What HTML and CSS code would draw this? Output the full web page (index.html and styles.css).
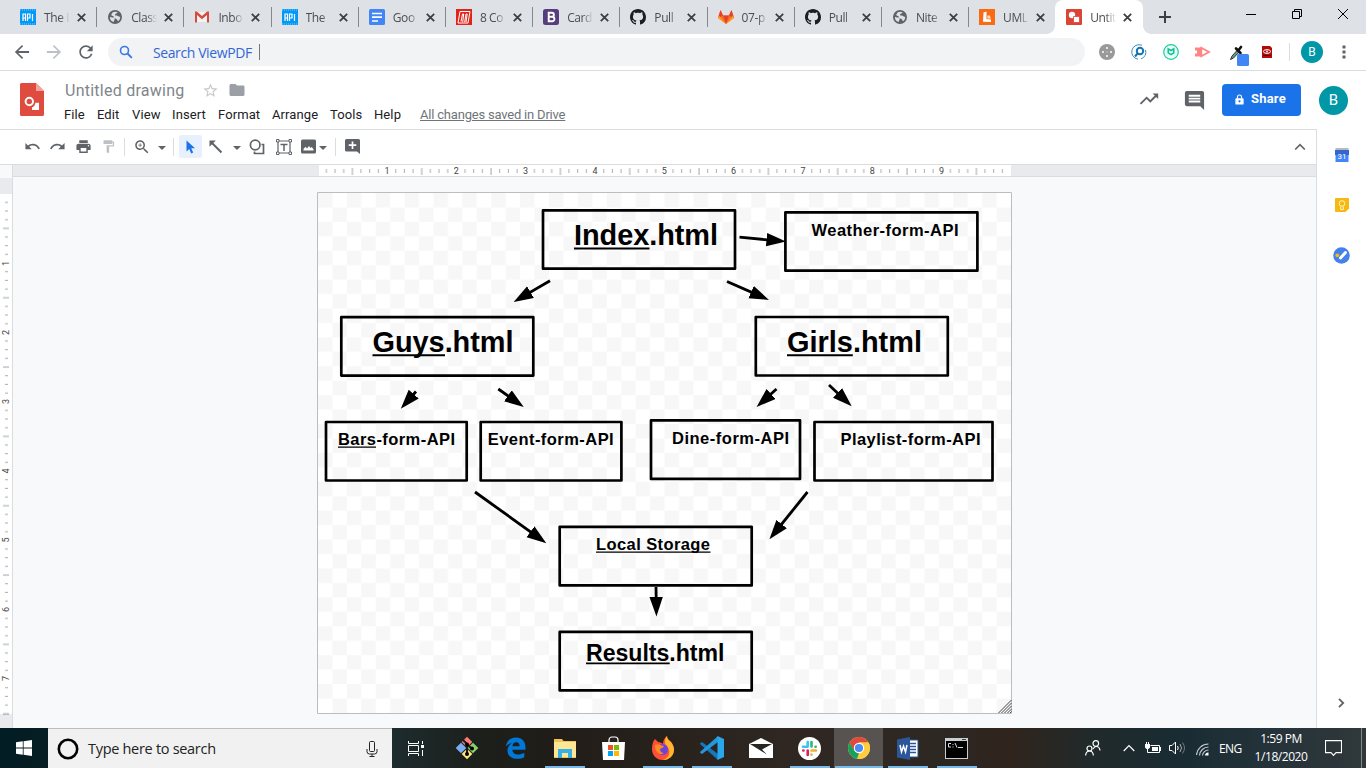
FILE: index.html
```html
<!DOCTYPE html>
<html lang="en">
<head>
<meta charset="utf-8">
<title>Untitled drawing</title>
<link rel="stylesheet" href="styles.css">
</head>
<body>
<svg class="defs" width="0" height="0">
  <symbol id="close" viewBox="0 0 9 9"><path d="M.8.8l7.4 7.4M8.200.8L.8 8.200" stroke="#3c4043" stroke-width="1.800" fill="none"/></symbol>
  <symbol id="api" viewBox="0 0 16 16"><path fill="#0099f7" d="M0 0h16v16H0z"/><path d="M0 1h16M0 15h16" stroke="#7fccff" stroke-dasharray="1 1"/><path d="M3 12V5h2.500v7M3 9h2.500M7.500 12V5H10v4H7.500M12.500 5v7" stroke="#fff" stroke-width="1.200" fill="none"/></symbol>
  <symbol id="globe" viewBox="0 0 24 24"><path fill="#5f6368" d="M12 1.500a10.500 10.500 0 1 0 0 21 10.500 10.500 0 0 0 0-21z"/><path fill="#dee1e6" d="M4.500 11.500c2 1.500 4.500.5 6.500 2 1.500 1.500-.5 3-1 6C6 18.500 4 15.500 4.500 11.500zM8 5.500c2-1.500 5-2 8-.5-.5 2-3.500 1.500-4 3.500-.500 1.500 2 1 3.500 1.500 2 .5 3 2 4.300 1.500.2 3-1.300 5.500-3.300 7-1-1.500-1-3.500-3-4-3-.5-4-1.500-3.500-3.500-1.500-1-3-.5-3.500-1.500C6 8 7.500 7 8 5.500z"/></symbol>
  <symbol id="github" viewBox="0 0 16 16"><path fill="#1b1f23" d="M8 0C3.580 0 0 3.580 0 8c0 3.540 2.290 6.530 5.470 7.590.4.070.55-.17.55-.38 0-.19-.01-.82-.01-1.490-2.010.37-2.530-.49-2.690-.94-.09-.23-.48-.94-.82-1.130-.28-.15-.68-.52-.01-.53.63-.01 1.080.58 1.230.82.72 1.210 1.870.87 2.330.66.07-.52.28-.87.51-1.070-1.780-.2-3.640-.89-3.640-3.950 0-.87.31-1.590.82-2.150-.08-.2-.36-1.020.08-2.120 0 0 .67-.21 2.200.82.64-.18 1.320-.27 2-.27s1.360.09 2 .27c1.530-1.040 2.200-.82 2.200-.82.44 1.100.16 1.920.08 2.120.51.56.82 1.270.82 2.150 0 3.070-1.870 3.750-3.650 3.950.29.25.54.73.54 1.480 0 1.070-.01 1.930-.01 2.200 0 .21.15.46.55.38A8.010 8.010 0 0 0 16 8c0-4.420-3.580-8-8-8z"/></symbol>
  <symbol id="caret" viewBox="0 0 8 4"><path fill="#5f6368" d="M0 0h8L4 4z"/></symbol>
</svg>

<div class="tabstrip">
  <div class="tab"><svg class="fav"><use href="#api"/></svg><span class="label">The I</span><svg class="x"><use href="#close"/></svg></div>
  <div class="tab"><svg class="fav"><use href="#globe"/></svg><span class="label">Class</span><svg class="x"><use href="#close"/></svg></div>
  <div class="tab"><svg class="fav" viewBox="0 0 16 16"><path fill="#f2f2f2" d="M2 3h12v10H2z"/><path fill="#d54b3d" d="M1 2.500h1.800L8 7l5.200-4.500H15V13.500h-2V6L8 10.200 3 6v7.500H1z"/></svg><span class="label">Inbo</span><svg class="x"><use href="#close"/></svg></div>
  <div class="tab"><svg class="fav"><use href="#api"/></svg><span class="label">The</span><svg class="x"><use href="#close"/></svg></div>
  <div class="tab"><svg class="fav" viewBox="0 0 16 16"><rect width="16" height="16" rx="1.500" fill="#4285f4"/><path d="M3 4.500h10M3 8.200h10M3 12h6" stroke="#fff" stroke-width="1.700"/></svg><span class="label">Goo</span><svg class="x"><use href="#close"/></svg></div>
  <div class="tab"><svg class="fav" viewBox="0 0 16 16"><path fill="#e2231a" d="M0 0h16v16H0z"/><path d="M4 2.500h10L12 14H2zM5 12.500l1.500-7.500h1.200L6.700 13M8.700 13L10 5h1.200L10 13" stroke="#fff" fill="none"/></svg><span class="label">8 Co</span><svg class="x"><use href="#close"/></svg></div>
  <div class="tab"><svg class="fav" viewBox="0 0 16 16"><rect width="16" height="16" rx="2.500" fill="#563d7c"/><path d="M5.700 3.800h3.200a2 2 0 0 1 0 4H5.700zm0 4h3.500a2.200 2.200 0 0 1 0 4.400H5.700z" stroke="#fff" stroke-width="1.900" fill="none"/></svg><span class="label">Card</span><svg class="x"><use href="#close"/></svg></div>
  <div class="tab"><svg class="fav"><use href="#github"/></svg><span class="label">Pull</span><svg class="x"><use href="#close"/></svg></div>
  <div class="tab"><svg class="fav" viewBox="0 0 16 16"><path fill="#fc6d26" d="M8 15L0 9l2.500-8L5 6.500h6L13.500 1 16 9z"/><path fill="#e24329" d="M8 15L5 6.500h6zM0 9l.8-2.500L2.500 1 5 6.500zM16 9l-.8-2.500L13.500 1 11 6.500z"/><path fill="#fca326" d="M8 15L0 9l.8-2.500zM8 15l8-6-.8-2.500z"/></svg><span class="label">07-p</span><svg class="x"><use href="#close"/></svg></div>
  <div class="tab"><svg class="fav"><use href="#github"/></svg><span class="label">Pull</span><svg class="x"><use href="#close"/></svg></div>
  <div class="tab"><svg class="fav"><use href="#globe"/></svg><span class="label">Nite</span><svg class="x"><use href="#close"/></svg></div>
  <div class="tab last"><svg class="fav" viewBox="0 0 16 16"><path fill="#f96b13" d="M0 0h16v16H0z"/><path fill="#fff" d="M4.500 3.500l3-1V10l4.500.5V13l-8-.2z"/><path fill="#ffd9bf" d="M8.300 6.500H11l.7 3.300-3.400-.4z"/></svg><span class="label">UML</span><svg class="x"><use href="#close"/></svg></div>
  <div class="tab active"><svg class="fav" viewBox="0 0 16 16"><rect width="16" height="16" rx="1" fill="#db4437"/><circle cx="6" cy="6" r="3.200" fill="#fff"/><path d="M7.500 7.500h6v6h-6z" fill="#fff" stroke="#db4437" stroke-width=".8"/></svg><span class="label">Untit</span><svg class="x"><use href="#close"/></svg></div>
  <svg class="newtab" viewBox="0 0 12 12"><path d="M6 0v12M0 6h12" stroke="#3c4043" stroke-width="2"/></svg>
  <div class="winbtns">
    <svg width="12" height="12"><path d="M1 6.500h10" stroke="#000"/></svg>
    <svg width="12" height="12"><path d="M1.500 3.500h7v7h-7zM3.500 3.500v-2h7v7h-2" fill="none" stroke="#000"/></svg>
    <svg width="12" height="12"><path d="M1 1l10 10M11 1L1 11" stroke="#000"/></svg>
  </div>
</div>

<div class="omnibar">
  <svg width="20" height="20" viewBox="0 0 24 24"><path fill="#5f6368" d="M20.500 10.900H7.400l5.900-5.900L12 3.500 3.500 12l8.500 8.500 1.400-1.500-6-5.900h13.100z"/></svg>
  <svg width="20" height="20" viewBox="0 0 24 24"><path fill="#bdc1c6" d="M3.500 10.900h13.100L10.700 5 12 3.500l8.500 8.500-8.500 8.500-1.400-1.500 6-5.900H3.500z"/></svg>
  <svg width="20" height="20" viewBox="0 0 24 24"><path fill="#5f6368" d="M17.650 6.350A7.958 7.958 0 0 0 12 4c-4.420 0-7.990 3.580-7.990 8s3.570 8 7.990 8c3.730 0 6.840-2.550 7.730-6h-2.080A5.990 5.990 0 0 1 12 18c-3.310 0-6-2.690-6-6s2.690-6 6-6c1.660 0 3.140.69 4.220 1.780L13 11h7V4l-2.350 2.350z"/></svg>
  <div class="omnibox">
    <svg width="14" height="14" viewBox="0 0 14 14"><circle cx="5.500" cy="5.500" r="4" fill="none" stroke="#3b78e7" stroke-width="1.600"/><path d="M8.500 8.500l4.300 4.300" stroke="#3b78e7" stroke-width="1.900"/></svg>
    <span class="query">Search ViewPDF</span><i class="cursor"></i>
  </div>
  <svg class="ext" width="16" height="16" viewBox="0 0 16 16"><circle cx="8" cy="8" r="8" fill="#999"/><path fill="#e4e4e4" d="M7 3h2v2H7zM7 11h2v2H7zM3 7h2v2H3zM11 7h2v2h-2zM7.500 7.500h1v1h-1z"/></svg>
  <svg width="16" height="16" viewBox="0 0 16 16"><path d="M11 1.300A7.300 7.300 0 1 0 7 15.200M14.500 6A7 7 0 0 1 10 14.900" stroke="#3d8fbe" fill="none"/><circle cx="9" cy="7" r="3.200" fill="none" stroke="#1674b1" stroke-width="2"/><path d="M6.500 9.500L4 12.500" stroke="#1674b1" stroke-width="2"/></svg>
  <svg width="16" height="16" viewBox="0 0 16 16"><circle cx="8" cy="8" r="7.300" fill="#e8fff7" stroke="#1ccfa0" stroke-width="1.200"/><path d="M5.200 4.800L8 6.500l2.800-1.700v4L8 10.700 5.200 8.800z" fill="none" stroke="#10bf93" stroke-width="1.500"/></svg>
  <svg width="16" height="16" viewBox="0 0 16 16"><path d="M0 3.500h6v9H0z" fill="#ff8585"/><path d="M6.300 3.700L14 8l-7.700 4.300z" fill="#fff" stroke="#ff8585" stroke-width="1.800"/><path d="M0 6.500h2v3H0z" fill="#fff"/></svg>
  <svg class="picker" width="20" height="22" viewBox="0 0 20 22"><path d="M1.500 15.500L3 12l5-5.500 1.800 1.800L4.500 14z" fill="#5ba384" stroke="#333"/><path d="M7 4.500l4.500 4.500M9.300 6.500L12 3" stroke="#111" stroke-width="2.600" stroke-linecap="round"/><rect x="8" y="10" width="12" height="12" rx="1.500" fill="#4285f4"/></svg>
  <svg width="10" height="12" viewBox="0 0 10 12"><path fill="#b30b0b" d="M0 0h8l2 2v10H0z"/><ellipse cx="5" cy="5.500" rx="3.500" ry="1.900" fill="none" stroke="#fff"/><circle cx="5" cy="5.500" r=".9" fill="#fff"/><path d="M1 9.500h8" stroke="#510000"/></svg>
  <i class="vline"></i>
  <span class="avatar small">B</span>
  <svg width="4" height="14" viewBox="0 0 4 14"><path fill="#5f6368" d="M.5.500h3v3h-3zM.5 5.500h3v3h-3zM.5 10.500h3v3h-3z"/></svg>
</div>

<header class="dochead">
  <svg class="logo" width="24" height="33" viewBox="0 0 24 33"><path fill="#e04b3f" d="M1.500 0H16l8 8v23.500a1.500 1.500 0 0 1-1.500 1.500h-21A1.500 1.500 0 0 1 0 31.500v-30A1.500 1.500 0 0 1 1.500 0z"/><path fill="#f2a49d" d="M16 0l8 8h-8z"/><circle cx="9.300" cy="18.500" r="3.700" fill="none" stroke="#fff" stroke-width="2"/><path fill="#fff" d="M19 19.800V27h-7v-2.500a6 6 0 0 0 3.500-4.700z"/></svg>
  <div class="docinfo">
    <div class="titlerow"><span class="title">Untitled drawing</span>
      <svg class="star" width="17" height="17" viewBox="0 0 24 24"><path fill="#c6c8ca" d="M22 9.240l-7.190-.62L12 2 9.190 8.630 2 9.240l5.460 4.730L5.820 21 12 17.270 18.180 21l-1.630-7.030L22 9.240zM12 15.400l-3.760 2.270 1-4.280-3.320-2.880 4.380-.38L12 6.100l1.710 4.040 4.380.38-3.320 2.880 1 4.280L12 15.400z"/></svg>
      <svg width="18" height="18" viewBox="0 0 24 24"><path fill="#9aa0a6" d="M10 4H4c-1.100 0-1.990.9-1.990 2L2 18c0 1.100.9 2 2 2h16c1.100 0 2-.9 2-2V8c0-1.100-.9-2-2-2h-8l-2-2z"/></svg>
    </div>
    <nav class="menu"><span>File</span><span>Edit</span><span>View</span><span>Insert</span><span>Format</span><span>Arrange</span><span>Tools</span><span>Help</span><span class="saved">All changes saved in Drive</span></nav>
  </div>
  <div class="actions">
    <svg class="trend" width="22" height="22" viewBox="0 0 24 24"><path fill="#5f6368" d="M16 6l2.290 2.290-4.880 4.880-4-4L2 16.590 3.410 18l6-6 4 4 6.300-6.290L22 12V6z"/></svg>
    <svg class="cmt" width="23" height="23" viewBox="0 0 24 24"><path fill="#5f6368" d="M21.990 4c0-1.100-.89-2-1.990-2H4c-1.100 0-2 .9-2 2v12c0 1.100.9 2 2 2h14l4 4-.01-18zM18 14H6v-2h12v2zm0-3H6V9h12v2zm0-3H6V6h12v2z"/></svg>
    <div class="share"><svg width="9" height="11" viewBox="0 0 9 12"><path d="M2.300 5V3.300a2.200 2.200 0 0 1 4.400 0V5" fill="none" stroke="#fff" stroke-width="1.200"/><rect y="4.500" width="9" height="7" rx="1" fill="#fff"/><circle cx="4.500" cy="8" r="1.200" fill="#1a73e8"/></svg><span>Share</span></div>
    <span class="avatar">B</span>
  </div>
</header>

<div class="main">
  <div class="editor">
    <div class="tools">
      <svg width="17" height="17" viewBox="0 0 24 24"><path fill="#5f6368" d="M12.500 8c-2.650 0-5.050.99-6.900 2.600L2 7v9h9l-3.620-3.620c1.390-1.160 3.160-1.880 5.120-1.880 3.540 0 6.550 2.310 7.600 5.500l2.370-.78C21.080 11.030 17.150 8 12.500 8z"/></svg>
      <svg width="17" height="17" viewBox="0 0 24 24"><path fill="#5f6368" d="M18.400 10.600C16.550 8.990 14.150 8 11.500 8c-4.650 0-8.580 3.030-9.960 7.220L3.900 16c1.050-3.190 4.050-5.500 7.600-5.500 1.950 0 3.730.72 5.120 1.880L13 16h9V7l-3.600 3.600z"/></svg>
      <svg width="17" height="17" viewBox="0 0 24 24"><path fill="#5f6368" d="M19 8H5c-1.660 0-3 1.340-3 3v6h4v4h12v-4h4v-6c0-1.660-1.340-3-3-3zm-3 11H8v-5h8v5zm3-7c-.55 0-1-.45-1-1s.45-1 1-1 1 .45 1 1-.45 1-1 1zm-1-9H6v4h12V3z"/></svg>
      <svg width="15" height="15" viewBox="0 0 24 24"><path fill="#bdc1c6" d="M18 4V3c0-.55-.45-1-1-1H5c-.55 0-1 .45-1 1v4c0 .55.45 1 1 1h12c.55 0 1-.45 1-1V6h1v4H9v11c0 .55.45 1 1 1h2c.55 0 1-.45 1-1v-9h8V4h-3z"/></svg>
      <i class="vline"></i>
      <svg width="18" height="18" viewBox="0 0 24 24"><path fill="#5f6368" d="M15.500 14h-.79l-.28-.27C15.410 12.590 16 11.110 16 9.500 16 5.910 13.090 3 9.500 3S3 5.910 3 9.500 5.910 16 9.500 16c1.610 0 3.090-.59 4.230-1.570l.27.28v.79l5 4.990L20.490 19l-4.990-5zm-6 0C7.010 14 5 11.990 5 9.500S7.010 5 9.500 5 14 7.010 14 9.500 11.990 14 9.500 14zm2.500-4h-2v2H9v-2H7V9h2V7h1v2h2v1z"/></svg>
      <svg class="caret"><use href="#caret"/></svg>
      <i class="vline"></i>
      <span class="selected"><svg width="10" height="14" viewBox="0 0 10 14"><path fill="#1a73e8" d="M.5.500v11l2.700-2.600 2 4.600 2-.9-2-4.400H9z"/></svg></span>
      <svg width="14" height="14" viewBox="0 0 14 14"><path d="M2 2l10.500 10.500" stroke="#5f6368" stroke-width="2"/><path fill="#5f6368" d="M.5.500h6.300L.5 6.800z"/></svg>
      <svg class="caret"><use href="#caret"/></svg>
      <svg width="16" height="16" viewBox="0 0 16 16"><circle cx="6.200" cy="6" r="4.800" fill="none" stroke="#5f6368" stroke-width="1.700"/><path d="M12.500 5.500h2v9h-9v-2" fill="none" stroke="#5f6368" stroke-width="1.700"/></svg>
      <svg width="16" height="16" viewBox="0 0 16 16"><path d="M2 2h12v12H2z" fill="none" stroke="#5f6368" stroke-width="1.200"/><path fill="#fff" stroke="#5f6368" d="M.5.500h2.500v2.500H.5zM13 .5h2.500v2.500H13zM.5 13h2.500v2.500H.5zM13 13h2.500v2.500H13z"/><path d="M4.500 5.500h7M8 5v7" stroke="#5f6368" stroke-width="1.500"/></svg>
      <svg width="15" height="15" viewBox="0 0 15 15"><rect y=".5" width="15" height="14" rx="1.500" fill="#5f6368"/><path fill="#fff" d="M2.500 11.500V10l2-2.200L6 9.500 8 7l1.500 2 1.200-1 1.800 2.300v1.200z"/></svg>
      <svg class="caret"><use href="#caret"/></svg>
      <i class="vline"></i>
      <svg width="15" height="15" viewBox="0 0 15 15"><path fill="#5f6368" d="M1.500 0h12A1.500 1.500 0 0 1 15 1.500V15l-3-2.500H1.500A1.500 1.500 0 0 1 0 11V1.500A1.500 1.500 0 0 1 1.500 0z"/><path d="M7.500 2.500v7.500M3.700 6.200h7.600" stroke="#fff" stroke-width="1.700"/></svg>
      <span></span>
      <svg width="12" height="8" viewBox="0 0 12 8"><path d="M1.200 6.500L6 1.700l4.800 4.800" fill="none" stroke="#5f6368" stroke-width="1.700"/></svg>
    </div>
    <svg class="hruler" width="1316" height="13">
      <defs><pattern id="ht" width="69.333" height="12" x="317.700" patternUnits="userSpaceOnUse"><path d="M8.700 4v4M17.300 4v4M26 4v4M43.300 4v4M52 4v4M60.700 4v4" stroke="#a9acb0"/><path d="M34.700 3v7" stroke="#a0a3a8"/></pattern></defs>
      <path fill="#f8f9fa" d="M0 0h12v13H0z"/><path fill="#e8eaed" d="M13 0h1303v12H13z"/><path fill="#fff" d="M319 0h692v12H319z"/>
      <path fill="url(#ht)" d="M319 0h692v12H319z"/>
      <path stroke="#dadce0" d="M12.500 0v13M12 11.500h1304"/>
      <path fill="#f8f9fa" d="M13 12h1303v1H13z"/>
      <g class="rlabel"><text x="387" y="9">1</text><text x="456.300" y="9">2</text><text x="525.600" y="9">3</text><text x="595" y="9">4</text><text x="664.300" y="9">5</text><text x="733.600" y="9">6</text><text x="803" y="9">7</text><text x="872.300" y="9">8</text><text x="941.600" y="9">9</text></g>
    </svg>
    <div class="work">
      <svg class="vruler" width="13" height="550" viewBox="0 178 13 550">
        <defs><pattern id="vt" width="12" height="69.333" y="193.700" patternUnits="userSpaceOnUse"><path d="M5 8.700h3M5 17.300h3M5 26h3M5 43.300h3M5 52h3M5 60.700h3" stroke="#a9acb0"/><path d="M3 34.700h6" stroke="#a0a3a8"/></pattern></defs>
        <path fill="#e8eaed" d="M0 178h12v550H0z"/><path fill="#fff" d="M0 194h12v520H0z"/><path fill="url(#vt)" d="M0 194h12v520H0z"/>
        <path stroke="#dadce0" d="M12.500 178v550"/><path stroke="#b6b9bd" d="M3 714.500h6"/>
        <g class="rlabel"><text transform="translate(9 263.500)rotate(-90)">1</text><text transform="translate(9 332.500)rotate(-90)">2</text><text transform="translate(9 401.500)rotate(-90)">3</text><text transform="translate(9 471)rotate(-90)">4</text><text transform="translate(9 540)rotate(-90)">5</text><text transform="translate(9 609.500)rotate(-90)">6</text><text transform="translate(9 678.500)rotate(-90)">7</text></g>
      </svg>
      <svg class="drawing" width="696" height="523" viewBox="317 192 696 523">
        <defs>
          <pattern id="check" x="318" y="193" width="28.880" height="28.880" patternUnits="userSpaceOnUse"><path fill="#f7f7f7" d="M0 0h14.440v14.440H0zM14.440 14.440h14.440v14.440H14.440z"/></pattern>
          <marker id="head" markerUnits="userSpaceOnUse" markerWidth="20" markerHeight="14" refX="9.500" refY="7" orient="auto"><path d="M0 0.300l19.500 6.700L0 13.700z"/></marker>
        </defs>
        <path fill="#fff" d="M317 192h695v522H317z"/><path fill="url(#check)" d="M318 193h693v520H318z"/>
        <path fill="none" stroke="#bdbdbd" d="M317.500 192.500h694v521h-694z"/>
        <g class="boxes">
          <rect x="543" y="210.400" width="192" height="58.300"/><rect x="785.400" y="212.400" width="192" height="58.300"/>
          <rect x="341.300" y="317.100" width="192" height="58.500"/><rect x="755.800" y="317" width="192" height="58.500"/>
          <rect x="326" y="422" width="140.700" height="58.500"/><rect x="480.700" y="422" width="140.700" height="58.500"/>
          <rect x="651" y="420.400" width="149" height="58.500"/><rect x="814.500" y="422" width="178" height="58.500"/>
          <rect x="559.700" y="526.900" width="192" height="58.500"/><rect x="559.700" y="631.900" width="192" height="58.500"/>
        </g>
        <g class="arrows">
          <path d="M550 280.700L522.300 296.900"/><path d="M727 281.500L759.800 295.900"/><path d="M739.500 237.200L776 240.600"/><path d="M416 391.500L407.400 401.200"/><path d="M498.300 389L515.600 401.300"/><path d="M776.500 389L764 400.300"/><path d="M829 385L844.400 399.400"/><path d="M475 492L538.200 537.300"/><path d="M807.500 492L775.700 531.500"/><path d="M656 587L656.300 606.500"/>
        </g>
        <g class="big"><text x="574" y="245" textLength="144">Index.html</text><text x="372.500" y="352" textLength="141">Guys.html</text><text x="787" y="352" textLength="135">Girls.html</text></g>
        <g class="mid"><text x="586" y="661" textLength="138.500">Results.html</text></g>
        <g class="sm"><text x="811.500" y="236" textLength="147">Weather-form-API</text><text x="338" y="445" textLength="117">Bars-form-API</text><text x="487.700" y="445" textLength="126">Event-form-API</text><text x="672" y="444" textLength="117">Dine-form-API</text><text x="840.500" y="445" textLength="140">Playlist-form-API</text><text x="596" y="550" textLength="114">Local Storage</text></g>
        <path d="M574 247.500h75.500v2H574zM372.500 354.300h72.500v2h-72.500zM787 354.300h65.800v2H787zM586 662.500h83.700v1.700H586zM338 446.600h38v1.200h-38zM596 551.500h114.500v1.300H596z"/>
        <path d="M998.500 713l13-13M1001.500 713l10-10M1004.500 713l7-7M1007.500 713l4-4M1010 713l1.500-1.500" stroke="#444" stroke-width="1"/>
      </svg>
    </div>
  </div>
  <aside class="side">
    <svg width="14" height="15" viewBox="0 0 14 15"><path fill="#b4bac2" d="M.5 0h13v3H.5z"/><path fill="#3765cd" d="M0 2h14v5H0z"/><path fill="#4285f4" d="M.5 7h13v7H.5z"/><text x="7" y="11" class="cal">31</text></svg>
    <svg width="14" height="14" viewBox="0 0 14 14"><path fill="#f5b912" d="M1 0h12a1 1 0 0 1 1 1v9.500L10.500 14H1a1 1 0 0 1-1-1V1a1 1 0 0 1 1-1z"/><circle cx="7" cy="5.500" r="2.800" fill="none" stroke="#fff2c8" stroke-width="1"/><path d="M5.700 8.500v3h2.600v-3" fill="none" stroke="#fff2c8" stroke-width="1"/></svg>
    <svg width="17" height="17" viewBox="0 0 17 17"><circle cx="8.500" cy="8.500" r="8.300" fill="#4580ee"/><path d="M7.500 11L12.500 5.500" stroke="#fff" stroke-width="3" stroke-linecap="round"/><circle cx="4.300" cy="8.300" r="1.900" fill="#fbbc04"/></svg>
    <svg class="chev" width="7" height="10" viewBox="0 0 7 10"><path d="M1 .8L5.200 5 1 9.200" fill="none" stroke="#5f6368" stroke-width="1.800"/></svg>
  </aside>
</div>

<div class="taskbar">
  <div class="start"><svg width="16" height="16" viewBox="0 0 16 16"><path fill="#fff" d="M0 2.200L6.800 1.300v6.300H0zM7.600 1.200L16 0v7.600H7.600zM0 8.400h6.800v6.300L0 13.800zM7.600 8.400H16V16l-8.400-1.200z"/></svg></div>
  <div class="search">
    <svg width="22" height="22" viewBox="0 0 22 22"><circle cx="11" cy="11" r="9.200" fill="none" stroke="#000" stroke-width="2.600"/></svg>
    <span class="stext">Type here to search</span>
    <svg width="12" height="16" viewBox="0 0 12 16"><rect x="3.500" y=".5" width="5" height="10" rx="1" fill="none" stroke="#222"/><path d="M1 8v2.500Q1 13 3.500 13h5Q11 13 11 10.500V8M6 13v2.500M3.500 15.500h5" fill="none" stroke="#222"/></svg>
  </div>
  <div class="apps">
    <span class="view"><svg width="16" height="15" viewBox="0 0 16 15"><path d="M.5 0v2.500h10V0M.5 15v-2.500h10V15M.5 4.500h10v6H.5zM14.500 0v3M14.500 9v6" fill="none" stroke="#fff"/><path fill="#fff" d="M13 4h3v3h-3z"/></svg></span>
    <span><svg width="24" height="24" viewBox="0 0 24 24"><g transform="rotate(45 12 12)"><path fill="#ff7b7b" d="M4 4h7.500v7.500H4z"/><path fill="#8bd163" d="M12.500 4H20v7.500h-7.500z"/><path fill="#78adf5" d="M4 12.500h7.500V20H4z"/><path fill="#ffe77d" d="M12.500 12.500H20V20h-7.500z"/></g><path d="M8 4l4 4v11M12 8l5 5" stroke="#1c1d1d" stroke-width="2" fill="none"/><circle cx="12" cy="18" r="2"/><circle cx="17" cy="12.500" r="2"/><circle cx="12" cy="8.500" r="2"/></svg></span>
    <span><svg width="22" height="22" viewBox="0 0 22 22"><path fill="#0078d7" d="M1 9.500C1.600 4 5.400.5 11 .5c6.500 0 9.500 4.500 9.500 10v2.300H7.300c.2 3 2.300 4.800 5.500 4.800 2.400 0 4.500-.6 6.500-1.800V20.300c-2 1-4.500 1.500-7.200 1.500C6 21.800 2.500 18.500 2.500 13.500c0-3.400 1.800-6 5-7.500C4.700 6.300 2.600 7.500 1 9.500zM7.400 9.200h7.200c0-2.600-1.200-4-3.500-4-2 0-3.300 1.500-3.700 4z"/></svg></span>
    <span class="run"><svg width="22" height="20" viewBox="0 0 22 20"><path fill="#eec45b" d="M0 1h8l1.500 2H22v17H0z"/><path fill="#ffe694" d="M0 4h22v15H0z"/><path fill="#35b1e7" d="M4 11h14v9h-4v-5H8v5H4z"/></svg></span>
    <span><svg width="23" height="24" viewBox="0 0 23 24"><path d="M7 8V4a3 3 0 0 1 3-3h3a3 3 0 0 1 3 3v4" fill="none" stroke="#fff" stroke-width="1.200"/><path fill="#fff" d="M0 6h23l-1 18H1z"/><path fill="#f25022" d="M6 9h5v5H6z"/><path fill="#7fba00" d="M12 9h5v5h-5z"/><path fill="#00a4ef" d="M6 15h5v5H6z"/><path fill="#ffb900" d="M12 15h5v5h-5z"/></svg></span>
    <span class="run"><svg width="24" height="24" viewBox="0 0 24 24"><path fill="#ff4f36" d="M4 3l3 3c2 0 4 1 5 2 0-3 1-6 4-8 0 3 2 4 4 6 3 4 4 8 2 12-2 4-6 6-10 6C5 24 1 19 1 13c0-4 1-8 3-10z"/><path fill="#ffb52e" d="M16 0c0 3 2 4 4 6 3 4 4 8 2 12-2 4-6 6-10 6 5-2 7-6 6-10-.5-3-3-4-4-7-.5-3 .5-5 2-7z"/><circle cx="11.500" cy="13.500" r="5.500" fill="#6b46d6"/><path fill="#ff8b24" d="M4 9c4-2 5 1 9 1-1 2-3 2-4 3 0 2 1 4 4 4-4 3-9 0-9-8z"/></svg></span>
    <span class="run"><svg width="24" height="24" viewBox="0 0 24 24"><path fill="#1279bf" d="M0 7.500l2-1.500 16 12v6L0 8z"/><path fill="#2297dc" d="M0 16.500L2 18 18 6V0L0 16z"/><path fill="#29a7ed" d="M17.500 0L24 3v18l-6.500 3z"/></svg></span>
    <span><svg width="24" height="20" viewBox="0 0 24 20"><path fill="#fff" d="M0 6L12 0l12 6v14H0z"/><path fill="#282522" d="M1 6h22L13 11.500l5 5z"/></svg></span>
    <span class="run"><svg width="23" height="23" viewBox="0 0 23 23"><circle cx="11.500" cy="11.500" r="11.500" fill="#fff"/><g stroke-width="2.600" stroke-linecap="round"><path d="M9.700 5v4M5 9.700h4.500" stroke="#36c5f0"/><path d="M13.500 5v4.500M17.500 9.700h.2" stroke="#2eb67d"/><path d="M13.500 13.500H18M13.500 17.500v.2" stroke="#ecb22e"/><path d="M9.700 13.500V18M5.300 13.500h.2" stroke="#e01e5a"/></g></svg></span>
    <span class="run active"><svg width="22" height="22" viewBox="0 0 22 22"><circle cx="11" cy="11" r="11" fill="#ffcd40"/><path fill="#de4b3e" d="M1.500 5.500A11 11 0 0 1 20.500 5.500H11L6 14z"/><path fill="#17a05e" d="M1.500 5.500l5 8.500L11 16l-2 5.800A11 11 0 0 1 1.500 5.500z"/><path fill="#ffcd40" d="M15.500 14L10 22a11 11 0 0 0 10.500-16.500H11z"/><circle cx="11" cy="11" r="5.200" fill="#fff"/><circle cx="11" cy="11" r="4.100" fill="#4b8bf4"/></svg></span>
    <span class="run word"><svg width="22" height="23" viewBox="0 0 22 23"><path fill="#fff" stroke="#2b579a" d="M12 3h9v17h-9z"/><path d="M12 6.500h7M12 9.500h7M12 12.500h7M12 15.500h7" stroke="#2b579a" stroke-width="1.300"/><path fill="#2b579a" d="M0 2.500L13 0v23L0 20.500z"/><path d="M3 8l1.500 7L6.500 9l2 6L10 8" fill="none" stroke="#fff" stroke-width="1.500"/></svg></span>
    <span class="run"><svg width="23" height="21" viewBox="0 0 23 21"><path fill="#c9ced2" d="M0 0h23v21H0z"/><path fill="#000" d="M1 3h21v17H1z"/><path d="M17 1.500h4" stroke="#444"/><path d="M6 5.500H3.500v3.500H6M8 6v1M8 8.500v1M10 5l2 4.500M13 9.500h5" fill="none" stroke="#ddd"/></svg></span>
  </div>
  <div class="tray">
    <svg width="16" height="16" viewBox="0 0 16 16"><g fill="none" stroke="#fff" stroke-width="1.200"><circle cx="10.800" cy="3.500" r="2.800"/><circle cx="4.500" cy="8.500" r="2.500"/><path d="M.6 15.500c.3-3 1.800-4.500 4-4.500s3.500 1.500 3.800 4.500M8 9c1-2 2-2.500 3.300-2.500 2 0 3.400 1.500 3.700 4"/></g></svg>
    <svg width="12" height="8" viewBox="0 0 12 8"><path d="M.7 7L6 1.500 11.300 7" fill="none" stroke="#fff" stroke-width="1.200"/></svg>
    <svg width="16" height="12" viewBox="0 0 16 12"><path d="M5.500 3.500h9v7h-9" fill="none" stroke="#fff"/><path fill="#fff" d="M7 5h6v4H7zM15 5h1v4h-1zM0 2h5v3.500L3.500 7h-2L0 5.500zM1 0h1v2H1zM3 0h1v2H3z"/><path d="M2.500 6v4.500h4" fill="none" stroke="#fff"/></svg>
    <svg width="16" height="14" viewBox="0 0 16 14"><path d="M.5 4.500H3L6.500 1v12L3 9.500H.5z" fill="none" stroke="#fff"/><path d="M8.500 5q1.500 2 0 4" fill="none" stroke="#fff"/><path d="M11 3q3 4 0 8" fill="none" stroke="#aaa"/><path d="M13.500 1.500q4 5.500 0 11" fill="none" stroke="#777"/></svg>
    <svg width="13" height="13" viewBox="0 0 13 13"><path d="M.5 12A12 12 0 0 1 12.500 1M3.500 12.500A9 9 0 0 1 12.500 4M6.500 12.500a6 6 0 0 1 6-5.500" fill="none" stroke="#c5cacc" stroke-width="1.200"/><path d="M9 12.500a3 3 0 0 1 3.500-3v3z" fill="#fff"/></svg>
    <span class="eng">ENG</span>
    <span class="clock"><b>1:59 PM</b><b>1/18/2020</b></span>
    <svg width="17" height="16" viewBox="0 0 17 16"><path d="M.5.600h16v12H11l-2.500 2.800L6 12.600H.5z" fill="none" stroke="#fff" stroke-width="1.100"/></svg>
    <i class="peek"></i>
  </div>
</div>
</body>
</html>
```
FILE: styles.css
```css
* { box-sizing: border-box; }
body { margin: 0; width: 1366px; height: 768px; overflow: hidden; display: flex; flex-direction: column; background: #fff; font-family: Roboto, "Liberation Sans", sans-serif; }
svg { display: block; flex: none; }
.defs { position: absolute; }

.tabstrip { height: 34px; flex: none; background: #dee1e6; display: flex; padding-left: 9px; }
.tab { width: 87.200px; flex: none; height: 34px; display: flex; align-items: center; padding-left: 11px; position: relative; }
.tab::after { content: ""; position: absolute; right: -1px; top: 7px; width: 1px; height: 20px; background: #85898e; }
.tab.last::after { display: none; }
.fav { width: 16px; height: 16px; }
.label { width: 26px; margin-left: 8px; white-space: nowrap; font: 12px "Open Sans", sans-serif; letter-spacing: -.4px; color: #4a4d51; -webkit-mask-image: linear-gradient(90deg, #000 60%, transparent); mask-image: linear-gradient(90deg, #000 60%, transparent); }
.x { width: 9px; height: 9px; margin-left: 7px; }
.tab.active { width: 88px; background: #fff; border-radius: 8px 8px 0 0; }
.tab.active::before, .tab.active::after { content: ""; position: absolute; width: 8px; height: 8px; top: 26px; background: radial-gradient(circle at 0 0, transparent 7.500px, #fff 8px); }
.tab.active::before { left: -8px; }
.tab.active::after { right: -8px; background: radial-gradient(circle at 100% 0, transparent 7.500px, #fff 8px); }
.newtab { width: 12px; height: 12px; margin: 11px 0 0 16px; }
.winbtns { margin-left: auto; padding: 8px 17px 0 0; display: flex; gap: 34px; }

.omnibar { height: 37px; flex: none; border-bottom: 1px solid #dadce0; padding-left: 6px; display: grid; grid-template-columns: 32px 32px 38px 977px 38px 32px 32px 32px 39px 18px 27px 18px 46px; align-items: center; justify-items: center; }
.omnibar > svg:nth-child(3) { margin-right: 6px; }
.omnibar .ext { margin-left: 6px; }
.omnibox { width: 977px; height: 28px; border-radius: 14px; background: #f1f3f4; display: flex; align-items: center; padding-left: 11px; }
.query { margin-left: 20px; width: 99px; white-space: nowrap; font: 14px "Open Sans", sans-serif; letter-spacing: -.4px; color: #3367d6; }
.cursor { width: 1px; height: 16px; background: #777; margin-left: 7px; }
.picker { margin: 6px 0 0 0; }
.vline { width: 1px; height: 18px; background: #dadce0; }
.avatar { width: 29px; height: 29px; border-radius: 50%; background: #0097a7; color: #fff; font-size: 15px; display: flex; align-items: center; justify-content: center; }
.avatar.small { width: 22px; height: 22px; font-size: 12px; }

.dochead { height: 58px; flex: none; display: flex; }
.logo { margin: 12px 0 0 20px; }
.docinfo { margin-left: 20px; padding-top: 9px; }
.titlerow { height: 20px; display: flex; align-items: center; }
.title { width: 120px; margin-left: 1px; font-size: 16px; letter-spacing: .25px; color: #80868b; white-space: nowrap; }
.star { margin: 0 9px 0 17px; }
.menu { margin-top: 6px; line-height: 18px; display: grid; grid-template-columns: 33px 35px 40px 46px 54px 58px 44px 46px 150px; font-size: 13px; letter-spacing: .1px; color: #202124; white-space: nowrap; }
.saved { color: #70757a; text-decoration: underline; letter-spacing: -.2px; }
.actions { margin-left: auto; display: flex; align-items: center; padding-right: 18px; }
.trend { margin-bottom: 2px; }
.cmt { margin: 0 0 0 23px; }
.share { width: 79px; height: 32px; margin-left: 16px; border-radius: 4px; background: #1a73e8; color: #fff; font-weight: 700; font-size: 13px; letter-spacing: .2px; display: flex; align-items: center; padding: 0 0 3px 13px; gap: 7px; }
.share svg { margin-top: 2px; }
.actions .avatar { margin-left: 18px; }

.main { height: 599px; flex: none; display: flex; }
.editor { width: 1316px; border-top: 1px solid #dadce0; }
.tools { height: 35px; border-bottom: 1px solid #dadce0; padding-left: 19px; display: grid; align-items: center; justify-items: center; grid-template-columns: 26px 25.500px 25.500px 25px 7px 28px 12px 11px 23px 27px 15px 26px 28px 20px 10px 14px 20px 1fr 33px; }
.tools > svg:not(.caret), .selected { margin-bottom: 1px; }
.caret { width: 8px; height: 4px; margin-top: 1px; }
.selected { width: 23px; height: 23px; border-radius: 2px; background: #e8f0fe; display: flex; align-items: center; justify-content: center; }
.rlabel { font: 9px Roboto, sans-serif; fill: #444; text-anchor: middle; }
.work { background: #f8f9fa; height: 550px; display: flex; align-items: flex-start; }
.drawing { margin: 14px 0 0 304px; }
.boxes { fill: none; stroke: #000; stroke-width: 2.700; stroke-linejoin: round; }
.arrows { fill: none; stroke: #000; stroke-width: 2.800; }
.arrows path { marker-end: url(#head); }
.big, .mid, .sm { font-family: "Liberation Sans", Arial, sans-serif; font-weight: 700; }
.big { font-size: 28.900px; }
.mid { font-size: 23.100px; }
.sm { font-size: 16.500px; }
.side { width: 50px; border-left: 1px solid #dadce0; display: flex; flex-direction: column; align-items: center; padding: 19px 0 20px; gap: 35px; }
.chev { margin-top: auto; }
.cal { font: 8px Roboto, sans-serif; fill: #fff; text-anchor: middle; }

.taskbar { height: 40px; flex: none; display: flex; background: linear-gradient(90deg, #021d24 0, #061e24 48px, #1d2c2e 392px, #1c1f1b 480px, #211d18 560px, #302722 800px, #2d2722 950px, #30241d 1010px, #212a2b 1090px, #192c33 1180px, #26333a 1280px, #30383a 1366px); }
.start { width: 48px; display: flex; align-items: center; justify-content: center; }
.search { width: 344px; background: #f1f1f1; border-top: 1px solid #bdbdbd; display: flex; align-items: center; padding: 0 14px 0 9px; }
.stext { flex: 1; margin-left: 9px; font: 14.500px "Open Sans", sans-serif; letter-spacing: -.3px; color: #222; }
.apps { display: flex; padding-left: 1px; }
.apps span { width: 49px; height: 40px; display: flex; align-items: center; justify-content: center; }
.apps .view { padding-right: 3px; }
.run { background: linear-gradient(#76b9ed, #76b9ed) center bottom / 40px 2px no-repeat; }
.run.active { background: linear-gradient(#76b9ed, #76b9ed) center bottom / 48px 2px no-repeat, #575350; }
.tray { margin-left: auto; height: 40px; display: flex; align-items: center; color: #fff; font: 12px "Open Sans", sans-serif; }
.tray svg:nth-child(2) { margin-left: 22px; }
.tray svg:nth-child(3) { margin-left: 10px; }
.tray svg:nth-child(4) { margin-left: 8px; }
.tray svg:nth-child(5) { margin: 2px 0 0 11px; }
.eng { margin-left: 10px; width: 23px; letter-spacing: -.6px; white-space: nowrap; }
.clock { width: 54px; margin-left: 12px; display: flex; flex-direction: column; align-items: center; line-height: 18px; letter-spacing: -.45px; white-space: nowrap; }
.clock b { font-weight: 400; }
.clock + svg { margin-left: 17px; }
.peek { width: 5px; height: 40px; margin-left: 19px; border-left: 1px solid #82888a; }
```
